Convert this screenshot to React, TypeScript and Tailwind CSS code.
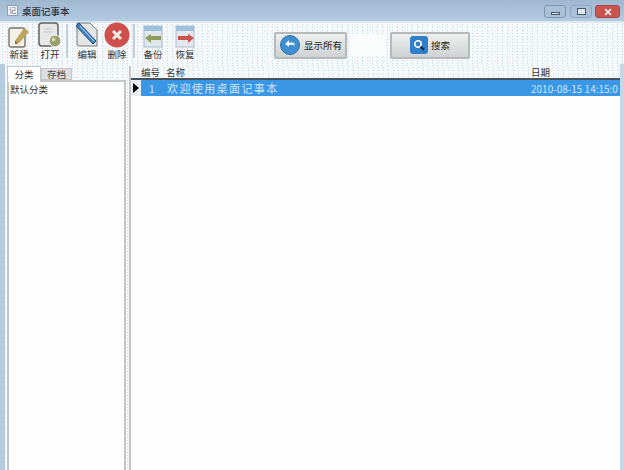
import { X } from "lucide-react";

const font = { fontFamily: '"Noto Sans CJK SC", "Liberation Sans", sans-serif' };

const dither =
  "bg-[#f6f9fb] bg-[radial-gradient(#c6d9e7_0.8px,transparent_1px),radial-gradient(#d5e3ed_0.9px,transparent_1px),radial-gradient(#ffffff_1px,transparent_1.2px)] bg-[length:5px_3px,7px_5px,11px_7px] bg-[position:0_0,2px_1px,4px_3px]";

const NewIcon = () => (
  <svg width="22" height="23" viewBox="0 0 22 23">
    <rect x="1" y="3" width="16" height="19" rx="2" fill="#f4f1e6" stroke="#77736a" strokeWidth="1.4" />
    <path d="M7 16 L16 3 L21 7 L11 18 L7 19 Z" fill="#b9a65a" />
    <path d="M7 16 L7 19 L10 18.5 Z" fill="#b5473c" />
  </svg>
);

const OpenIcon = () => (
  <svg width="26" height="26" viewBox="0 0 26 26">
    <rect x="2" y="1" width="19" height="23" rx="3" fill="#e6e8e8" stroke="#5e6163" strokeWidth="1.5" />
    <path d="M7 7 H15 M7 10 H15" stroke="#b9c3c9" strokeWidth="1" />
    <circle cx="18" cy="19" r="6" fill="#9a9f6e" stroke="#fff" strokeWidth="1" />
    <circle cx="16.5" cy="17.5" r="2" fill="#d6d6a6" />
  </svg>
);

const EditIcon = () => (
  <svg width="26" height="26" viewBox="0 0 26 26">
    <path d="M3 1 H16 L23 8 V24 H5 Q3 24 3 22 Z" fill="#e4e6e6" stroke="#76797c" strokeWidth="1" />
    <path d="M2 4 L5 1 L22 19 L19 22 Z" fill="#3f82c4" stroke="#1d4f85" strokeWidth="1" />
    <path d="M6 4 L20 19" stroke="#cfe3f3" strokeWidth="1" />
  </svg>
);

const DeleteIcon = () => (
  <svg width="26" height="26" viewBox="0 0 26 26">
    <circle cx="13" cy="13" r="12.5" fill="#cf4f4c" />
    <path d="M9 9 L17 17 M17 9 L9 17" stroke="#f6ece6" strokeWidth="3" />
  </svg>
);

const BackupIcon = () => (
  <svg width="20" height="23" viewBox="0 0 20 23">
    <rect x="1" y="1" width="18" height="21" fill="#dfe6ec" stroke="#a9bccd" strokeWidth="1" />
    <rect x="1" y="1" width="18" height="5" fill="#9fc0dc" />
    <path d="M2 13 L8 9 V11 H18 V15 H8 V18 Z" fill="#8d9a5c" />
  </svg>
);

const RestoreIcon = () => (
  <svg width="20" height="23" viewBox="0 0 20 23">
    <rect x="1" y="1" width="18" height="21" fill="#e4e8ed" stroke="#a9bccd" strokeWidth="1" />
    <rect x="1" y="1" width="18" height="5" fill="#9fc0dc" />
    <path d="M19 13 L13 9 V11 H3 V15 H13 V18 Z" fill="#c9544c" />
  </svg>
);

const ToolButton = ({ icon, label, className }: { icon: React.ReactNode; label: string; className: string }) => (
  <div className={`flex flex-col items-center self-start ${className}`}>
    <div className="flex h-[25px] items-end justify-center">{icon}</div>
    <span className="text-[9.5px] leading-[12px] text-[#333]">{label}</span>
  </div>
);

const Separator = () => <div className="mx-[3px] mb-[6px] h-[34px] w-[2px] bg-[#c3cfd8]" />;

export default function App() {
  return (
    <div className="flex h-[470px] w-[624px] flex-col overflow-hidden bg-[#b4cce0]" style={font}>
      {/* title bar */}
      <div className="flex h-[21px] shrink-0 items-start bg-gradient-to-b from-[#9fb8d0] to-[#b3cbe1] pl-[7px]">
        <div className="mt-[5px] flex h-[11px] w-[11px] items-center justify-center border border-[#8aa1b8] bg-[#eef3f7] text-[7px] leading-none text-[#60768c]">
          记
        </div>
        <span className="ml-[4px] mt-[4px] text-[9.5px] font-medium leading-[14px] text-[#2a3440]">桌面记事本</span>
        <div className="ml-auto mr-[4px] mt-[5px] flex">
          <div className="flex h-[13px] w-[22px] items-end justify-center rounded-[3px] border border-[#7f97ad] bg-[#a9c0d6] pb-[2px]">
            <div className="h-[3px] w-[9px] border border-[#47586a] bg-[#dfe8ef]" />
          </div>
          <div className="ml-[4px] flex h-[13px] w-[22px] items-center justify-center rounded-[3px] border border-[#8fa9c0] bg-[#a9c0d6]">
            <div className="h-[7px] w-[9px] border border-[#47586a] bg-[#dfe8ef]" />
          </div>
          <div className="ml-[3px] flex h-[13px] w-[25px] items-center justify-center rounded-[3px] border border-[#a34a46] bg-[#cc5450]">
            <X size={10} strokeWidth={3.5} className="text-white" />
          </div>
        </div>
      </div>

      {/* toolbar */}
      <div className={`flex h-[43px] shrink-0 items-center border-t-2 border-[#dde8f1] ${dither}`}>
        <ToolButton icon={<NewIcon />} label="新建" className="ml-[8px] w-[22px]" />
        <ToolButton icon={<OpenIcon />} label="打开" className="ml-[7px] w-[26px]" />
        <Separator />
        <ToolButton icon={<EditIcon />} label="编辑" className="ml-[3px] w-[26px]" />
        <ToolButton icon={<DeleteIcon />} label="删除" className="ml-[4px] w-[26px]" />
        <Separator />
        <ToolButton icon={<BackupIcon />} label="备份" className="ml-[3px] w-[24px]" />
        <ToolButton icon={<RestoreIcon />} label="恢复" className="ml-[8px] w-[24px]" />

        <div className="ml-[77px] mt-[3px] flex h-[27px] w-[73px] items-center rounded-[2px] border-2 border-[#b5b9ba] bg-gradient-to-b from-[#eef0f0] to-[#cfd2d2] pl-[4px]">
          <div className="flex h-[20px] w-[20px] items-center justify-center rounded-full border border-[#2f6fa8] bg-[#3f8fd0]">
            <svg width="12" height="12" viewBox="0 0 12 12">
              <path d="M5 1 L1 5 L5 8 V6 H9 Q11 6 10 9 Q12 3 8 3.5 H5 Z" fill="#e8f2fa" />
            </svg>
          </div>
          <span className="ml-[4px] text-[9.5px] text-[#222]">显示所有</span>
        </div>
        <div className="ml-[4px] mt-[3px] h-[22px] w-[34px] bg-[#fbfcfc]" />
        <div className="ml-[5px] mt-[3px] flex h-[27px] w-[80px] items-center rounded-[2px] border-2 border-[#b5b9ba] bg-gradient-to-b from-[#eef0f0] to-[#cfd2d2] pl-[18px]">
          <div className="flex h-[18px] w-[18px] items-center justify-center rounded-[3px] bg-[#2f80c8]">
            <svg width="12" height="12" viewBox="0 0 12 12">
              <circle cx="5" cy="5" r="3.2" fill="none" stroke="#fff" strokeWidth="1.6" />
              <path d="M7.5 7.5 L11 11" stroke="#123" strokeWidth="2" />
            </svg>
          </div>
          <span className="ml-[3px] text-[9.5px] text-[#222]">搜索</span>
        </div>
      </div>

      {/* main */}
      <div className={`flex min-h-0 flex-1 ${dither}`}>
        <div className="w-[5px] shrink-0 bg-[#b4cce0]" />
        {/* left panel */}
        <div className="ml-[2px] mt-[2px] flex w-[119px] shrink-0 flex-col">
          <div className="flex h-[14px] shrink-0 items-end">
            <div className="z-10 -mb-[2px] flex h-[16px] w-[34px] items-center justify-center border border-b-0 border-[#c4c8ca] bg-white text-[9.5px] text-[#333]">
              分类
            </div>
            <div className="flex h-[12px] w-[31px] items-center justify-center border border-[#c4c8ca] bg-[#dcdfe0] text-[9.5px] text-[#444]">
              存档
            </div>
          </div>
          <div className="flex-1 border-2 border-b-0 border-[#c4c6c6] bg-[#fdfdfd] pl-[1px] text-[9.5px] leading-[14px] text-[#333]">
            默认分类
          </div>
        </div>

        {/* list */}
        <div className="ml-[3px] mt-[2px] flex min-w-0 flex-1 flex-col border-l-2 border-[#c4c6c6] bg-[#fdfdfd]">
          <div className={`flex h-[14px] shrink-0 items-center border-b-2 border-[#47525c] text-[9.5px] text-[#333] ${dither}`}>
            <span className="ml-[10px] w-[25px]">编号</span>
            <span className="w-[365px]">名称</span>
            <span>日期</span>
          </div>
          <div className="flex h-[16px] shrink-0 items-center">
            <div className="flex h-[16px] w-[10px] shrink-0 items-center justify-center bg-[#e8eef2]">
              <div className="h-0 w-0 border-y-[5px] border-l-[6px] border-y-transparent border-l-black" />
            </div>
            <div className="flex h-[16px] flex-1 items-center overflow-hidden whitespace-nowrap bg-[#3a97e6] text-[#cfe6f8]">
              <span className="ml-[8px] w-[18px] text-[10px]">1</span>
              <span className="w-[364px] text-[11px] tracking-[1.4px]">欢迎使用桌面记事本</span>
              <span className="text-[10px]">2010-08-15 14:15:0</span>
            </div>
          </div>
        </div>
        <div className="w-[4px] shrink-0 bg-[#c5d6e4]" />
      </div>
    </div>
  );
}
